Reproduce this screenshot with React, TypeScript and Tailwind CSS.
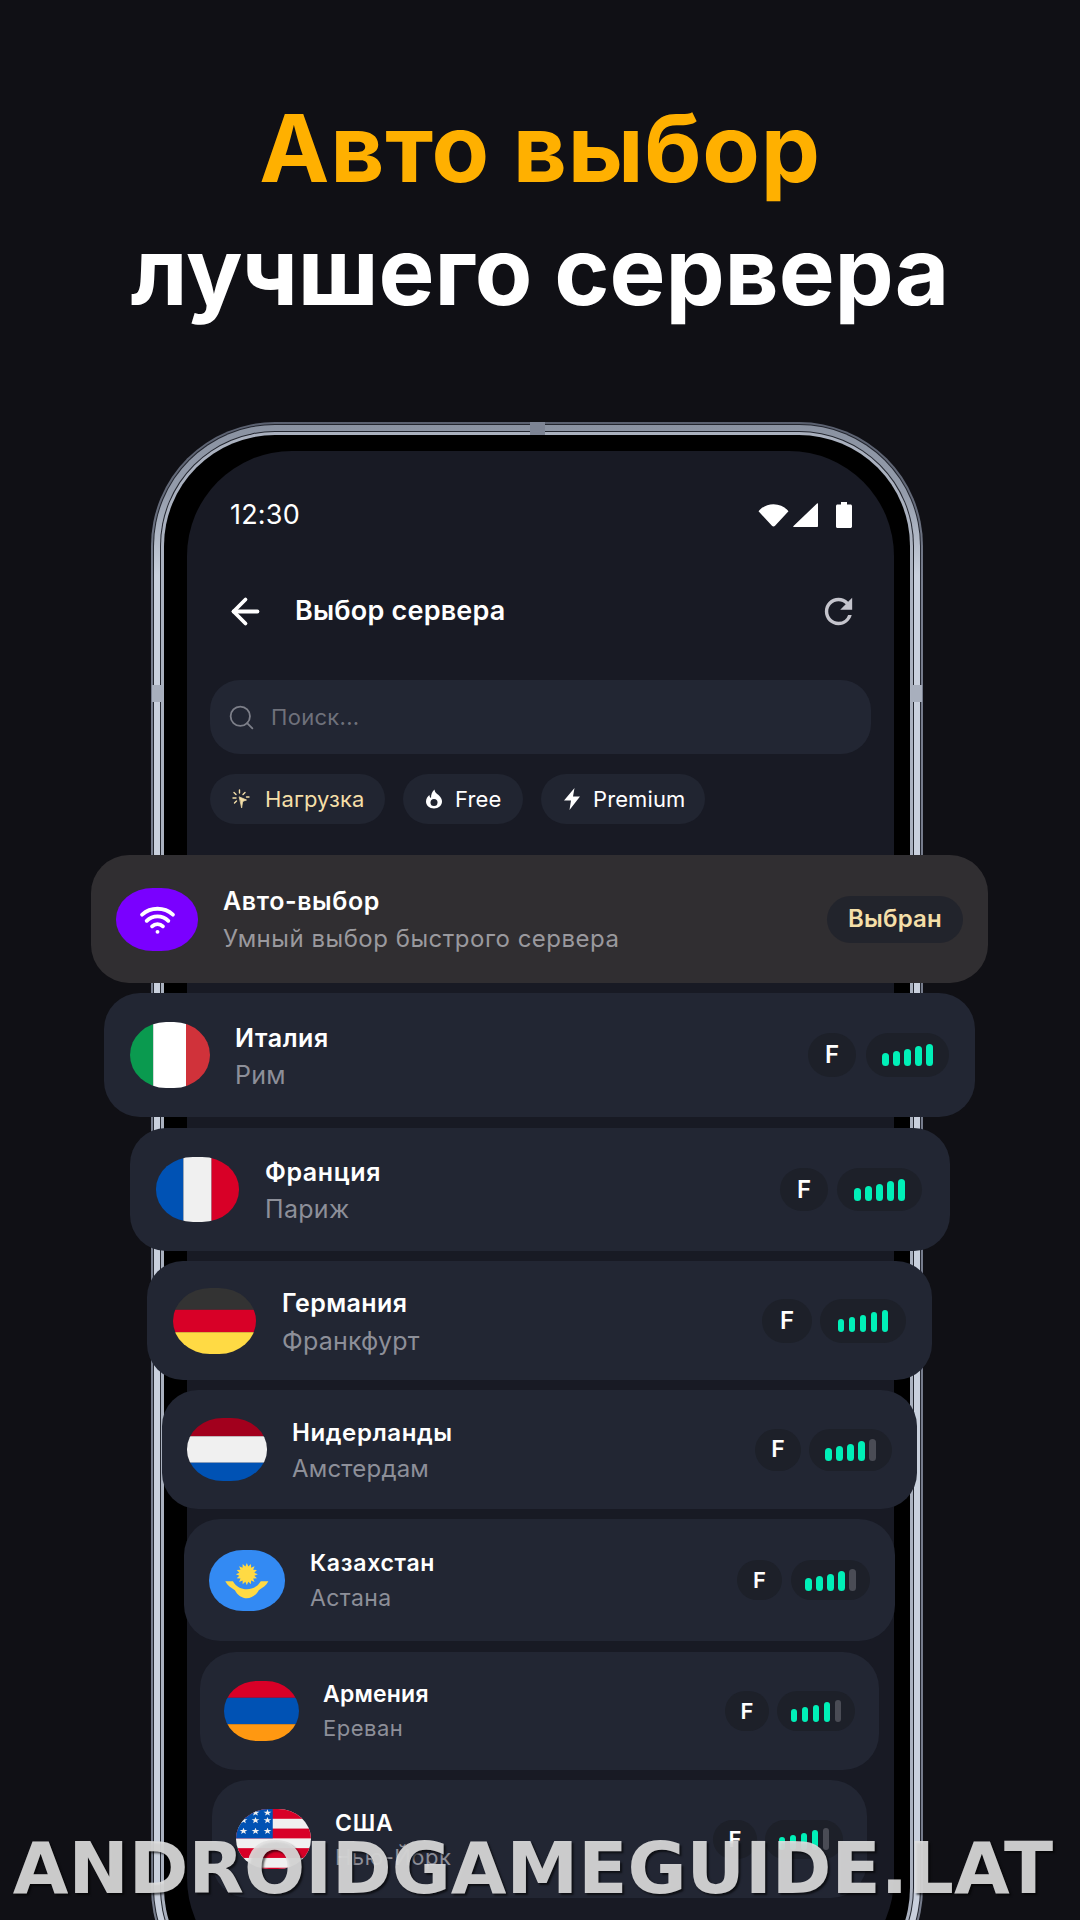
import { ArrowLeft, Search, Wifi } from "lucide-react";
import { MdRefresh } from "react-icons/md";

function starPoints(cx: number, cy: number, outer: number, inner: number, n: number) {
  const pts: string[] = [];
  for (let i = 0; i < n * 2; i++) {
    const r = i % 2 === 0 ? outer : inner;
    const a = (Math.PI * i) / n - Math.PI / 2;
    pts.push(`${cx + r * Math.cos(a)},${cy + r * Math.sin(a)}`);
  }
  return pts.join(" ");
}

function Stripes({ colors, vertical, stops }: { colors: string[]; vertical?: boolean; stops: number[] }) {
  return (
    <svg viewBox="0 0 100 100" preserveAspectRatio="none" className="block h-full w-full">
      {colors.map((c, i) =>
        vertical ? (
          <rect key={c} x={stops[i]} y="0" width={stops[i + 1] - stops[i]} height="100" fill={c} />
        ) : (
          <rect key={c} x="0" y={stops[i]} width="100" height={stops[i + 1] - stops[i]} fill={c} />
        ),
      )}
    </svg>
  );
}

function KazFlag() {
  return (
    <svg viewBox="0 0 229 182" preserveAspectRatio="none" className="block h-full w-full">
      <rect width="229" height="182" fill="#338af3" />
      <polygon points={starPoints(114, 72, 33, 23, 16)} fill="#ffda44" />
      <path
        d="M49 93 L72 93 C82 110 98 117 114 117 C130 117 146 110 156 93 L179 93 C172 106 162 112 150 120 C142 135 128 144 114 144 C100 144 86 135 78 120 C66 112 56 106 49 93 Z"
        fill="#ffda44"
      />
    </svg>
  );
}

function UsaFlag() {
  const stripe = 31;
  return (
    <svg viewBox="0 0 200 190" preserveAspectRatio="none" className="block h-full w-full">
      <rect width="200" height="190" fill="#f0f0f0" />
      {[0, 2, 4, 6].map((i) => (
        <rect key={i} y={i * stripe} width="200" height={stripe} fill="#d80027" />
      ))}
      <rect width="98" height="93" fill="#0052b4" />
      {[20, 52, 84].map((x) =>
        [12, 70, 38].map((y) => (
          <polygon key={`${x}-${y}`} points={starPoints(x, y === 38 ? 36 : y, 11, 4.4, 5)} fill="#f0f0f0" />
        )),
      )}
    </svg>
  );
}

const cards = [
  {
    name: "Италия",
    city: "Рим",
    flag: <Stripes vertical colors={["#0a9a4f", "#ffffff", "#d0323a"]} stops={[0, 29, 70, 100]} />,
    box: "mt-[10px] ml-[104px] mr-[105px] h-[124px] rounded-[36px] pl-[26px] pr-[26px]",
    flagBox: "w-[80px] h-[66px] rounded-[36px/33px]",
    text: "ml-[25px] mt-[2px]",
    nameCls: "text-[25px] leading-[37px] tracking-[0.6px]",
    cityCls: "text-[25px] leading-[37px] tracking-[0.2px]",
    fBox: "w-[48px] h-[44px] text-[24px]",
    pill: "w-[83px] h-[44px] ml-[10px]",
    level: 5,
  },
  {
    name: "Франция",
    city: "Париж",
    flag: <Stripes vertical colors={["#0052b4", "#f0f0f0", "#d80027"]} stops={[0, 33, 67, 100]} />,
    box: "mt-[11px] ml-[130px] mr-[130px] h-[123px] rounded-[36px] pl-[26px] pr-[28px]",
    flagBox: "w-[83px] h-[65px] rounded-[37px/32px]",
    text: "ml-[26px]",
    nameCls: "text-[25px] leading-[37px] tracking-[0.6px]",
    cityCls: "text-[25px] leading-[37px] tracking-[0.3px]",
    fBox: "w-[48px] h-[43px] text-[24px]",
    pill: "w-[85px] h-[43px] ml-[9px]",
    level: 5,
  },
  {
    name: "Германия",
    city: "Франкфурт",
    flag: <Stripes colors={["#333333", "#d80027", "#ffda44"]} stops={[0, 33, 67, 100]} />,
    box: "mt-[10px] ml-[147px] mr-[148px] h-[119px] rounded-[36px] pl-[26px] pr-[26px]",
    flagBox: "w-[83px] h-[66px] rounded-[37px/33px]",
    text: "ml-[26px]",
    nameCls: "text-[25px] leading-[38px] tracking-[0.4px]",
    cityCls: "text-[25px] leading-[38px] tracking-[0.2px]",
    fBox: "w-[50px] h-[44px] text-[24px]",
    pill: "w-[86px] h-[44px] ml-[8px]",
    level: 5,
  },
  {
    name: "Нидерланды",
    city: "Амстердам",
    flag: <Stripes colors={["#a2001d", "#f0f0f0", "#0052b4"]} stops={[0, 29, 71, 100]} />,
    box: "mt-[10px] ml-[162px] mr-[163px] h-[119px] rounded-[36px] pl-[25px] pr-[25px]",
    flagBox: "w-[80px] h-[63px] rounded-[36px/31px]",
    text: "ml-[25px]",
    nameCls: "text-[24px] leading-[36px] tracking-[0.6px]",
    cityCls: "text-[24px] leading-[36px] tracking-[0.2px]",
    fBox: "w-[46px] h-[42px] text-[23px]",
    pill: "w-[83px] h-[42px] ml-[8px]",
    level: 4,
  },
  {
    name: "Казахстан",
    city: "Астана",
    flag: <KazFlag />,
    box: "mt-[10px] ml-[184px] mr-[185px] h-[122px] rounded-[36px] pl-[25px] pr-[25px]",
    flagBox: "w-[76px] h-[61px] rounded-[34px/30px]",
    text: "ml-[25px]",
    nameCls: "text-[23px] leading-[35px] tracking-[0.7px]",
    cityCls: "text-[23px] leading-[35px] tracking-[0.4px]",
    fBox: "w-[45px] h-[40px] text-[22px]",
    pill: "w-[79px] h-[40px] ml-[9px]",
    level: 4,
  },
  {
    name: "Армения",
    city: "Ереван",
    flag: <Stripes colors={["#d80027", "#0052b4", "#ff9811"]} stops={[0, 28, 72, 100]} />,
    box: "mt-[11px] ml-[200px] mr-[201px] h-[118px] rounded-[36px] pl-[24px] pr-[24px]",
    flagBox: "w-[75px] h-[60px] rounded-[33px/30px]",
    text: "ml-[24px] -mt-[2px]",
    nameCls: "text-[23px] leading-[34px] tracking-[0.2px]",
    cityCls: "text-[22px] leading-[34px] tracking-[0.5px]",
    fBox: "w-[44px] h-[40px] text-[22px]",
    pill: "w-[78px] h-[40px] ml-[8px]",
    level: 4,
  },
  {
    name: "США",
    city: "Нью-Йорк",
    flag: <UsaFlag />,
    box: "mt-[10px] ml-[212px] mr-[213px] h-[118px] rounded-[36px] pl-[24px] pr-[24px]",
    flagBox: "w-[75px] h-[60px] rounded-[33px/30px]",
    text: "ml-[24px]",
    nameCls: "text-[23px] leading-[34px] tracking-[0.8px]",
    cityCls: "text-[22px] leading-[34px] tracking-[0.5px]",
    fBox: "w-[44px] h-[39px] text-[22px]",
    pill: "w-[78px] h-[39px] ml-[8px]",
    level: 4,
  },
];

const barHeights = ["h-[13px]", "h-[15px]", "h-[17px]", "h-[20px]", "h-[22px]"];

function Bars({ level }: { level: number }) {
  return (
    <div className="flex items-end gap-[4.5px]">
      {barHeights.map((h, i) => (
        <div
          key={h}
          className={`w-[6.5px] rounded-full ${h} ${i < level ? "bg-[#00f0b8]" : "bg-[#4a4c55]"}`}
        />
      ))}
    </div>
  );
}

function ClickIcon() {
  return (
    <svg viewBox="0 0 18 20" className="h-[20px] w-[18px]" fill="none" stroke="#f4dfa8" strokeWidth="1.4" strokeLinecap="round">
      <path d="M7.5 1v3M2 3.5l2 2M1 9h3M2.5 14l2-2M13 3.5l-2 2M17 8h-2.5" />
      <path d="M7.5 8l7 3-3 1-1 1 -.8 5.5z" fill="#f4dfa8" strokeWidth="0.8" />
    </svg>
  );
}

function FlameIcon() {
  return (
    <svg viewBox="0 0 18 20" className="h-[20px] w-[18px]">
      <path
        d="M9.5 0.5C10 4 12 4.5 14 6.5C16 8.5 17 10.500 17 12.500C17 16.500 13.500 19.500 9 19.500C4.500 19.500 1 16.500 1 12.500C1 9.500 2.500 7.500 4.500 6C4.500 7.500 5 8.500 6 9C6 5.500 7 2.500 9.500 0.500Z"
        fill="#ffffff"
      />
      <circle cx="9" cy="13.500" r="3.500" fill="#212531" />
    </svg>
  );
}

function BoltIcon() {
  return (
    <svg viewBox="0 0 18 22" className="h-[22px] w-[18px]">
      <path d="M11.500 0L1 12.500H8L6.500 22L17 8.500H10Z" fill="#ffffff" />
    </svg>
  );
}

function Chip({ icon, label, cls, textCls }: { icon: React.ReactNode; label: string; cls: string; textCls: string }) {
  return (
    <div className={`flex h-[50px] items-center rounded-full bg-[#212531] ${cls}`}>
      {icon}
      <span className={`text-[22px] tracking-[0.1px] ${textCls}`}>{label}</span>
    </div>
  );
}

export default function App() {
  return (
    <div className="relative flex h-[1920px] w-[1080px] flex-col overflow-hidden bg-[#101015] font-['Inter',sans-serif] text-white">
      <h1 className="pt-[87px] text-center text-[94px] leading-[123px] font-bold">
        <span className="block tracking-[0.7px] text-[#ffb000]">Авто выбор</span>
        <span className="block tracking-[-0.1px]">лучшего сервера</span>
      </h1>

      {/* phone body, nested rings make the metal edge */}
      <div className="relative mt-[89px] ml-[151px] h-[1590px] w-[772px] shrink-0 rounded-[124px] bg-[linear-gradient(180deg,#5b6170_0,#666c7b_90px,#767c8c_160px)] p-[2px]">
        <div className="h-full rounded-[122px] bg-[#23262f] p-px">
          <div className="h-full rounded-[121px] bg-[linear-gradient(180deg,#8a92a1_0,#959dac_70px,#c9d0dd_150px)] p-[6px]">
            <div className="h-full rounded-[115px] bg-[#23262f] p-px">
              <div className="h-full rounded-[114px] bg-[#aab1bf] p-[3px]">
                <div className="h-full rounded-[111px] bg-black pt-[16px] pr-[16.5px] pb-[16px] pl-[23px]">
                  <div className="h-full rounded-[105px] bg-[#181a24] px-[23px] pt-[48px]">
                    <div className="flex h-[32px] items-center justify-between pr-[19px] pl-[20px]">
                      <span className="text-[27px] tracking-[0.2px]">12:30</span>
                      <div className="flex items-center">
                        <svg viewBox="0 0 30 22" className="h-[23px] w-[31px]">
                          <path d="M0.500 7C4 2.500 9 0 15 0C21 0 26 2.500 29.500 7L16.500 21C15.700 22 14.300 22 13.500 21Z" fill="#fff" />
                        </svg>
                        <svg viewBox="0 0 25 24" className="ml-[4px] h-[24px] w-[25px]">
                          <path d="M24 0.500C24.600 0 25 0.300 25 1V23C25 23.600 24.600 24 24 24H1C0.300 24 0 23.400 0.500 23Z" fill="#fff" />
                        </svg>
                        <svg viewBox="0 0 16 26" className="ml-[18px] h-[26px] w-[16px]">
                          <path d="M5 0H11V2.500H14.500C15.300 2.500 16 3.200 16 4V24.500C16 25.300 15.300 26 14.500 26H1.500C0.700 26 0 25.300 0 24.500V4C0 3.200 0.700 2.500 1.500 2.500H5Z" fill="#fff" />
                        </svg>
                      </div>
                    </div>

                    <div className="mt-[64px] flex h-[32px] items-center pr-[12px] pl-[15px]">
                      <ArrowLeft size={41} strokeWidth={2.2} className="shrink-0" />
                      <span className="ml-[29px] text-[27px] font-semibold tracking-[0.2px]">Выбор сервера</span>
                      <MdRefresh size={41} className="ml-auto text-[#c4c4cc]" />
                    </div>

                    <div className="mt-[53px] flex h-[74px] items-center rounded-[30px] bg-[#222633] pl-[17px]">
                      <Search size={29} strokeWidth={1.5} className="text-[#7d7f89]" />
                      <span className="ml-[15px] text-[22px] tracking-[0.3px] text-[#6f717b]">Поиск...</span>
                    </div>

                    <div className="mt-[20px] flex gap-[18px]">
                      <Chip
                        icon={<ClickIcon />}
                        label="Нагрузка"
                        cls="w-[175px] gap-[15px] pl-[22px]"
                        textCls="text-[#f4dfa8]"
                      />
                      <Chip icon={<FlameIcon />} label="Free" cls="w-[120px] gap-[12px] pl-[22px]" textCls="" />
                      <Chip icon={<BoltIcon />} label="Premium" cls="w-[164px] gap-[12px] pl-[22px]" textCls="" />
                    </div>
                  </div>
                </div>
              </div>
            </div>
          </div>
        </div>
        <div className="absolute top-0 left-[379px] h-[13px] w-[15px] bg-[#7d8494]" />
        <div className="absolute top-[263px] left-[1px] h-[17px] w-[11px] bg-[#a8afbd]" />
        <div className="absolute top-[263px] right-[1px] h-[17px] w-[11px] bg-[#a8afbd]" />
      </div>

      {/* cards lie over the phone and stick out of it */}
      <div className="absolute top-[855px] left-0 w-full">
        <div className="mr-[92px] ml-[91px] flex h-[128px] items-center rounded-[38px] bg-[#302e31] pr-[25px] pl-[25px]">
          <div className="flex h-[63px] w-[82px] shrink-0 items-center justify-center rounded-[37px/31px] bg-[#7a00ff]">
            <Wifi size={37} strokeWidth={2.5} />
          </div>
          <div className="ml-[25px] pt-[1px]">
            <div className="text-[25px] leading-[38px] font-semibold tracking-[0.6px]">Авто-выбор</div>
            <div className="text-[24px] leading-[38px] tracking-[0.5px] text-[#9a999e]">
              Умный выбор быстрого сервера
            </div>
          </div>
          <div className="ml-auto flex h-[47px] w-[136px] items-center justify-center rounded-full bg-[#22242c] text-[24px] font-semibold tracking-[0.2px] text-[#f4dfa8]">
            Выбран
          </div>
        </div>

        {cards.map((c) => (
          <div key={c.name} className={`flex items-center bg-[#222633] ${c.box}`}>
            <div className={`shrink-0 overflow-hidden ${c.flagBox}`}>{c.flag}</div>
            <div className={`pt-[2px] ${c.text}`}>
              <div className={`font-semibold ${c.nameCls}`}>{c.name}</div>
              <div className={`text-[#8d8f99] ${c.cityCls}`}>{c.city}</div>
            </div>
            <div className={`ml-auto flex items-center justify-center rounded-full bg-[#1d2029] font-semibold ${c.fBox}`}>
              F
            </div>
            <div className={`flex items-center justify-center rounded-full bg-[#1d2029] ${c.pill}`}>
              <Bars level={c.level} />
            </div>
          </div>
        ))}
      </div>

      <div className="absolute top-[1826px] left-0 w-full pr-[14px] text-center font-['DejaVu_Sans',sans-serif] text-[72px] leading-[84px] font-bold whitespace-nowrap text-[#e0e0e0]/90 [text-shadow:2px_2px_2px_rgba(0,0,0,0.6)]">
        ANDROIDGAMEGUIDE.LAT
      </div>
    </div>
  );
}
